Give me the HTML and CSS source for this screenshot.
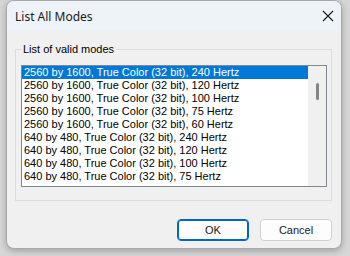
FILE: index.html
```html
<!DOCTYPE html>
<html>
<head>
<meta charset="utf-8">
<link rel="stylesheet" href="styles.css">
</head>
<body>
<div class="window">
  <div class="titlebar">
    <span class="title">List All Modes</span>
    <svg class="close" width="12" height="12" viewBox="0 0 12 12"><path d="M1 1 L11 11 M11 1 L1 11" stroke="#1a1a1a" stroke-width="1.1" fill="none"/></svg>
  </div>
  <div class="content">
    <fieldset class="group">
      <legend class="legend">List of valid modes</legend>
      <div class="listbox">
        <div class="items">
          <div class="item selected">2560 by 1600, True Color (32 bit), 240 Hertz</div>
          <div class="item">2560 by 1600, True Color (32 bit), 120 Hertz</div>
          <div class="item">2560 by 1600, True Color (32 bit), 100 Hertz</div>
          <div class="item">2560 by 1600, True Color (32 bit), 75 Hertz</div>
          <div class="item">2560 by 1600, True Color (32 bit), 60 Hertz</div>
          <div class="item">640 by 480, True Color (32 bit), 240 Hertz</div>
          <div class="item">640 by 480, True Color (32 bit), 120 Hertz</div>
          <div class="item">640 by 480, True Color (32 bit), 100 Hertz</div>
          <div class="item">640 by 480, True Color (32 bit), 75 Hertz</div>
        </div>
        <div class="scrollbar"><div class="thumb"></div></div>
      </div>
    </fieldset>
    <div class="buttons">
      <button class="btn default">OK</button>
      <button class="btn">Cancel</button>
    </div>
  </div>
</div>
</body>
</html>
```
FILE: styles.css
```css
html, body {
  margin: 0;
  padding: 0;
}
body {
  width: 350px;
  height: 256px;
  overflow: hidden;
  background: #d6d6d6;
  font-family: "Liberation Sans", Arial, sans-serif;
}
.window {
  margin-left: 6px;
  width: 336px;
  height: 249px;
  box-sizing: border-box;
  border: 1px solid #a8a8a8;
  border-radius: 8px;
  background: #f0f0f0;
  display: flex;
  flex-direction: column;
  overflow: hidden;
  box-shadow: 0 2px 6px rgba(0,0,0,0.25);
}
.titlebar {
  height: 30px;
  background: #eef2f9;
  display: flex;
  align-items: center;
  justify-content: space-between;
  padding: 0 6px 0 8px;
  flex: none;
}
.title {
  font-family: "Noto Sans", sans-serif;
  font-size: 12px;
  color: #1a1a1a;
}
.close {
  display: block;
  margin-right: 1px;
}
.content {
  flex: 1;
  display: flex;
  flex-direction: column;
  padding: 0 9px 7px 8px;
}
.group {
  margin: 12px 0 0 0;
  border: 1px solid #dcdcdc;
  padding: 9px 4px 13px 5px;
  min-width: 0;
}
.legend {
  font-size: 11px;
  line-height: 13px;
  padding: 0 2px;
  color: #000;
}
.listbox {
  height: 120px;
  border: 1px solid #828790;
  background: #fff;
  display: flex;
}
.items {
  flex: 1;
  padding-top: 0;
}
.item {
  height: 13px;
  line-height: 13px;
  font-size: 11px;
  padding-left: 2px;
  color: #000;
  white-space: nowrap;
  overflow: hidden;
}
.item.selected {
  background: #0078d7;
  color: #fff;
}
.scrollbar {
  width: 18px;
  background: #f0f0f0;
  position: relative;
}
.thumb {
  position: absolute;
  left: 8px;
  top: 17px;
  width: 3px;
  height: 17px;
  border-radius: 2px;
  background: #858585;
}
.buttons {
  margin-top: auto;
  display: flex;
  justify-content: flex-end;
  gap: 11px;
}
.btn {
  width: 72px;
  height: 22px;
  box-sizing: border-box;
  border: 1px solid #d0d0d0;
  border-radius: 4px;
  background: #fdfdfd;
  font-family: "Liberation Sans", Arial, sans-serif;
  font-size: 11px;
  color: #1a1a1a;
  padding: 0;
}
.btn.default {
  border: 1px solid #0067c0;
  box-shadow: inset 0 0 0 1px #0067c0;
}
```
